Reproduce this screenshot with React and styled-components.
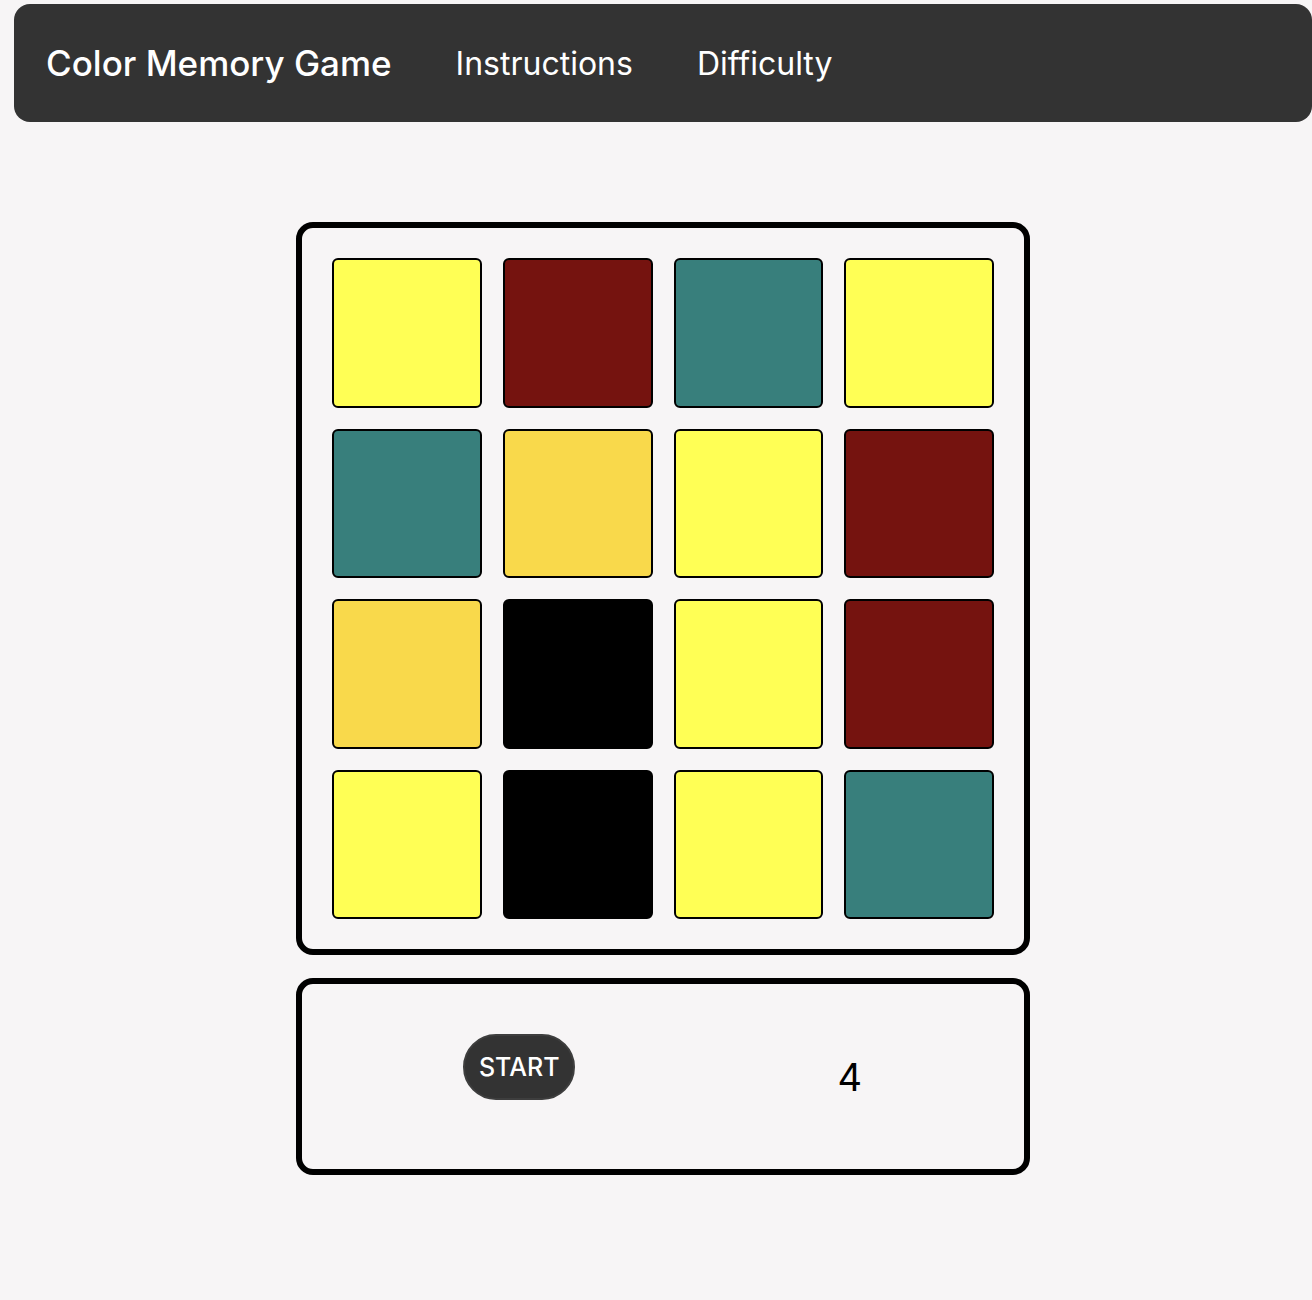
import React from "react";
import styled, { createGlobalStyle } from "styled-components";

const Global = createGlobalStyle`
  html, body {
    margin: 0;
    padding: 0;
    background: #f7f5f6;
    font-family: Inter, "Open Sans", sans-serif;
  }
  body { min-height: 1300px; }
`;

const Page = styled.div`
  padding: 4px 0 0 14px;
  display: flex;
  flex-direction: column;
  align-items: center;
`;

const Header = styled.header`
  align-self: stretch;
  height: 118px;
  background: #333333;
  border-radius: 16px;
  display: flex;
  align-items: center;
  gap: 64px;
  padding: 0 0 0 32px;
  color: #fff;
`;

const Title = styled.h1`
  margin: 0;
  font-size: 35px;
  font-weight: 500;
`;

const NavItem = styled.a`
  font-size: 32px;
  font-weight: 400;
  color: #fff;
  text-decoration: none;
`;

const Board = styled.div`
  margin-top: 100px;
  width: 734px;
  height: 733px;
  box-sizing: border-box;
  border: 6px solid #000;
  border-radius: 17px;
  padding: 30px;
  display: grid;
  grid-template-columns: repeat(4, 1fr);
  grid-template-rows: repeat(4, 1fr);
  gap: 21px;
`;

const Tile = styled.div`
  background: ${(p) => p.$color};
  border: 2px solid #000;
  border-radius: 6px;
`;

const Panel = styled.div`
  margin-top: 23px;
  width: 734px;
  height: 197px;
  box-sizing: border-box;
  border: 6px solid #000;
  border-radius: 17px;
  padding: 0 9px 0 52px;
  display: grid;
  grid-template-columns: 1fr 1fr;
  align-items: center;
  justify-items: center;
`;

const ButtonCell = styled.div`
  padding-bottom: 20px;
`;

const StartButton = styled.button`
  width: 112px;
  height: 66px;
  border-radius: 33px;
  background: #333333;
  border: 2px solid #3e3e3e;
  color: #fff;
  font-family: Inter, "Open Sans", sans-serif;
  font-size: 25px;
  font-weight: 500;
  cursor: pointer;
`;

const Level = styled.div`
  font-size: 38px;
  font-weight: 400;
  color: #000;
`;

const Y = "#ffff55";
const R = "#75130f";
const T = "#387f7c";
const G = "#f9d94b";
const K = "#000000";

const tiles = [Y, R, T, Y, T, G, Y, R, G, K, Y, R, Y, K, Y, T];

export default function App() {
  return (
    <>
      <Global />
      <Page>
        <Header>
          <Title>Color Memory Game</Title>
          <NavItem href="#">Instructions</NavItem>
          <NavItem href="#">Difficulty</NavItem>
        </Header>
        <Board>
          {tiles.map((c, i) => (
            <Tile key={i} $color={c} />
          ))}
        </Board>
        <Panel>
          <ButtonCell>
            <StartButton>START</StartButton>
          </ButtonCell>
          <Level>4</Level>
        </Panel>
      </Page>
    </>
  );
}
